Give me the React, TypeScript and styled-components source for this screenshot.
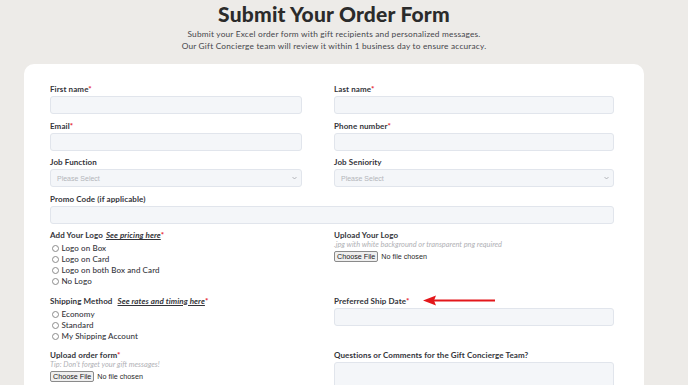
import React from 'react'
import styled, { createGlobalStyle } from 'styled-components'

const GlobalStyle = createGlobalStyle`
  html, body {
    margin: 0;
    padding: 0;
    background: #edebe8;
    overflow: hidden;
  }
  body {
    font-family: 'Lato', 'Liberation Sans', sans-serif;
    color: #2f3036;
  }
`

const Page = styled.div`
  width: 688px;
  height: 385px;
  box-sizing: border-box;
  padding: 1px 20px 0 0;
  display: flex;
  flex-direction: column;
  align-items: center;
`

const Title = styled.h1`
  margin: 0;
  font-size: 21px;
  line-height: 26px;
  font-weight: 900;
  color: #2b2b2b;
  letter-spacing: 0.2px;
`

const Subtitle = styled.p`
  margin: 1px 0 0 0;
  font-size: 8.3px;
  line-height: 12px;
  color: #45464b;
  text-align: center;
  letter-spacing: 0.2px;
`

const Card = styled.div`
  width: 620px;
  margin: 12px 0 0 0;
  background: #ffffff;
  border-radius: 10px 10px 0 0;
  box-sizing: border-box;
  padding: 20px 30px 0 26px;
  flex: 1;
`

const Grid = styled.div`
  display: grid;
  grid-template-columns: 252px 280px;
  column-gap: 32px;
  row-gap: 6.5px;
  align-items: start;
`

const Field = styled.div<{ $wide?: boolean }>`
  display: flex;
  flex-direction: column;
  grid-column: ${p => (p.$wide ? '1 / span 2' : 'auto')};
`

const Label = styled.div<{ $gap?: number }>`
  font-size: 8px;
  line-height: 10px;
  font-weight: 700;
  color: #33343a;
  margin-bottom: ${p => p.$gap ?? 2}px;
  white-space: nowrap;
  letter-spacing: 0.1px;
`

const Req = styled.span`
  color: #e5222d;
`

const Link = styled.a`
  font-style: italic;
  text-decoration: underline;
  color: #33343a;
  margin-left: 3px;
`

const Input = styled.input`
  display: block;
  height: 18px;
  box-sizing: border-box;
  background: #f4f6f9;
  border: 1px solid #e1e5ec;
  border-radius: 3px;
  outline: none;
  width: 100%;
`

const TextArea = styled.textarea`
  display: block;
  height: 40px;
  box-sizing: border-box;
  background: #f4f6f9;
  border: 1px solid #e1e5ec;
  border-radius: 3px;
  resize: none;
  width: 100%;
`

const SelectWrap = styled.div`
  position: relative;
  height: 18px;
`

const Select = styled.select`
  display: block;
  appearance: none;
  width: 100%;
  height: 18px;
  box-sizing: border-box;
  background: #f4f6f9;
  border: 1px solid #e1e5ec;
  border-radius: 3px;
  padding: 0 6px;
  font-family: 'Liberation Sans', Arial, sans-serif;
  font-size: 7px;
  color: #b3b5ba;
  outline: none;
`

const Chevron = styled.svg`
  position: absolute;
  right: 5px;
  top: 7px;
  width: 5px;
  height: 4px;
  pointer-events: none;
`

const RadioList = styled.div`
  display: flex;
  flex-direction: column;
  padding-bottom: 2px;
`

const RadioRow = styled.label`
  display: flex;
  align-items: center;
  gap: 2.5px;
  font-size: 8px;
  line-height: 11px;
  font-weight: 500;
  color: #33343a;
  padding-left: 2px;
  letter-spacing: 0.1px;
`

const RadioDot = styled.span`
  width: 5px;
  height: 5px;
  border: 0.8px solid #8c8c8c;
  border-radius: 50%;
  background: #fff;
`

const Hint = styled.div`
  font-size: 7.4px;
  line-height: 9px;
  font-style: italic;
  color: #b0b1b5;
  margin-bottom: 2px;
`

const FileRow = styled.div`
  display: flex;
  align-items: center;
  gap: 3px;
  font-family: 'Liberation Sans', Arial, sans-serif;
  font-size: 7.2px;
  color: #2a2a2a;
`

const FileButton = styled.button`
  height: 11px;
  padding: 0 2px;
  font-family: 'Liberation Sans', Arial, sans-serif;
  font-size: 7.2px;
  line-height: 9px;
  color: #1a1a1a;
  background: #efefef;
  border: 1px solid #8a8a8a;
  border-radius: 2px;
`

const ArrowHolder = styled.span`
  position: relative;
`

const Arrow = styled.svg`
  position: absolute;
  left: 14px;
  top: -1px;
  width: 74px;
  height: 11px;
`

function Radios({ items }: { items: string[] }) {
  return (
    <RadioList>
      {items.map(i => (
        <RadioRow key={i}>
          <RadioDot />
          {i}
        </RadioRow>
      ))}
    </RadioList>
  )
}

function SelectField({ label }: { label: string }) {
  return (
    <Field>
      <Label>{label}</Label>
      <SelectWrap>
        <Select defaultValue="">
          <option value="">Please Select</option>
        </Select>
        <Chevron viewBox="0 0 10 6">
          <path d="M1 1l4 4 4-4" fill="none" stroke="#9a9ca2" strokeWidth="1.4" />
        </Chevron>
      </SelectWrap>
    </Field>
  )
}

function FilePicker() {
  return (
    <FileRow>
      <FileButton type="button">Choose File</FileButton>
      <span>No file chosen</span>
    </FileRow>
  )
}

export default function App() {
  return (
    <Page>
      <GlobalStyle />
      <Title>Submit Your Order Form</Title>
      <Subtitle>
        Submit your Excel order form with gift recipients and personalized messages.
        <br />
        Our Gift Concierge team will review it within 1 business day to ensure accuracy.
      </Subtitle>
      <Card>
        <Grid>
          <Field>
            <Label>
              First name<Req>*</Req>
            </Label>
            <Input />
          </Field>
          <Field>
            <Label>
              Last name<Req>*</Req>
            </Label>
            <Input />
          </Field>
          <Field>
            <Label>
              Email<Req>*</Req>
            </Label>
            <Input />
          </Field>
          <Field>
            <Label>
              Phone number<Req>*</Req>
            </Label>
            <Input />
          </Field>
          <SelectField label="Job Function" />
          <SelectField label="Job Seniority" />
          <Field $wide>
            <Label>Promo Code (if applicable)</Label>
            <Input />
          </Field>
          <Field>
            <Label $gap={3}>
              Add Your Logo<Link>See pricing here</Link>
              <Req>*</Req>
            </Label>
            <Radios items={['Logo on Box', 'Logo on Card', 'Logo on both Box and Card', 'No Logo']} />
          </Field>
          <Field>
            <Label $gap={0}>Upload Your Logo</Label>
            <Hint>.jpg with white background or transparent png required</Hint>
            <FilePicker />
          </Field>
          <Field>
            <Label $gap={3}>
              Shipping Method <Link>See rates and timing here</Link>
              <Req>*</Req>
            </Label>
            <Radios items={['Economy', 'Standard', 'My Shipping Account']} />
          </Field>
          <Field>
            <Label>
              Preferred Ship Date<Req>*</Req>
              <ArrowHolder>
                <Arrow viewBox="0 0 74 11">
                  <line x1="10" y1="5.5" x2="72" y2="5.5" stroke="#e3171b" strokeWidth="2.2" />
                  <path d="M0 5.5L13 0.5L11 5.5L13 10.5Z" fill="#e3171b" />
                </Arrow>
              </ArrowHolder>
            </Label>
            <Input />
          </Field>
          <Field>
            <Label $gap={0}>
              Upload order form<Req>*</Req>
            </Label>
            <Hint>Tip: Don't forget your gift messages!</Hint>
            <FilePicker />
          </Field>
          <Field>
            <Label>Questions or Comments for the Gift Concierge Team?</Label>
            <TextArea />
          </Field>
        </Grid>
      </Card>
    </Page>
  )
}
